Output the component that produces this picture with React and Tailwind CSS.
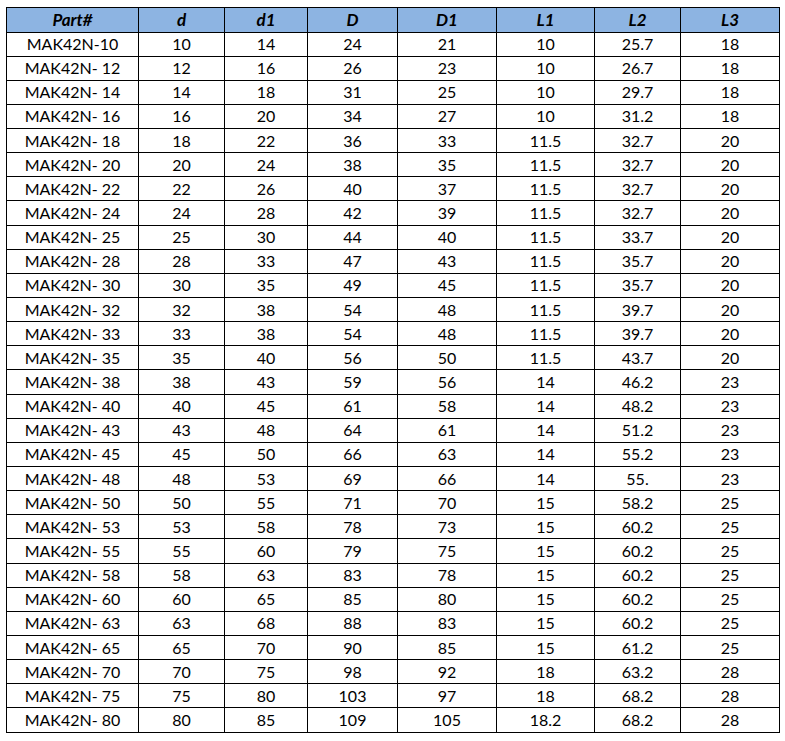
const COLS = ["Part#", "d", "d1", "D", "D1", "L1", "L2", "L3"];

const ROWS = [
  ["MAK42N-10", "10", "14", "24", "21", "10", "25.7", "18"],
  ["MAK42N- 12", "12", "16", "26", "23", "10", "26.7", "18"],
  ["MAK42N- 14", "14", "18", "31", "25", "10", "29.7", "18"],
  ["MAK42N- 16", "16", "20", "34", "27", "10", "31.2", "18"],
  ["MAK42N- 18", "18", "22", "36", "33", "11.5", "32.7", "20"],
  ["MAK42N- 20", "20", "24", "38", "35", "11.5", "32.7", "20"],
  ["MAK42N- 22", "22", "26", "40", "37", "11.5", "32.7", "20"],
  ["MAK42N- 24", "24", "28", "42", "39", "11.5", "32.7", "20"],
  ["MAK42N- 25", "25", "30", "44", "40", "11.5", "33.7", "20"],
  ["MAK42N- 28", "28", "33", "47", "43", "11.5", "35.7", "20"],
  ["MAK42N- 30", "30", "35", "49", "45", "11.5", "35.7", "20"],
  ["MAK42N- 32", "32", "38", "54", "48", "11.5", "39.7", "20"],
  ["MAK42N- 33", "33", "38", "54", "48", "11.5", "39.7", "20"],
  ["MAK42N- 35", "35", "40", "56", "50", "11.5", "43.7", "20"],
  ["MAK42N- 38", "38", "43", "59", "56", "14", "46.2", "23"],
  ["MAK42N- 40", "40", "45", "61", "58", "14", "48.2", "23"],
  ["MAK42N- 43", "43", "48", "64", "61", "14", "51.2", "23"],
  ["MAK42N- 45", "45", "50", "66", "63", "14", "55.2", "23"],
  ["MAK42N- 48", "48", "53", "69", "66", "14", "55.", "23"],
  ["MAK42N- 50", "50", "55", "71", "70", "15", "58.2", "25"],
  ["MAK42N- 53", "53", "58", "78", "73", "15", "60.2", "25"],
  ["MAK42N- 55", "55", "60", "79", "75", "15", "60.2", "25"],
  ["MAK42N- 58", "58", "63", "83", "78", "15", "60.2", "25"],
  ["MAK42N- 60", "60", "65", "85", "80", "15", "60.2", "25"],
  ["MAK42N- 63", "63", "68", "88", "83", "15", "60.2", "25"],
  ["MAK42N- 65", "65", "70", "90", "85", "15", "61.2", "25"],
  ["MAK42N- 70", "70", "75", "98", "92", "18", "63.2", "28"],
  ["MAK42N- 75", "75", "80", "103", "97", "18", "68.2", "28"],
  ["MAK42N- 80", "80", "85", "109", "105", "18.2", "68.2", "28"],
];

// column widths taken from the sheet
const WIDTHS = ["w-[132px]", "w-[86px]", "w-[83px]", "w-[90px]", "w-[99px]", "w-[98px]", "w-[86px]", "w-[99px]"];

export default function App() {
  return (
    <div className="bg-white w-[785px] h-[741px] pl-[6px] pt-[7px] font-['Lato','Liberation_Sans',sans-serif] text-black">
      <table className="table-fixed border-collapse w-[773px] text-[16px] leading-none">
        <colgroup>
          {WIDTHS.map((w, i) => (
            <col key={i} className={w} />
          ))}
        </colgroup>
        <thead>
          <tr className="h-[24.5px] bg-[#8db4e2]">
            {COLS.map((c) => (
              <th key={c} className="border border-black text-center text-[17px] font-bold italic p-0">
                {c}
              </th>
            ))}
          </tr>
        </thead>
        <tbody>
          {ROWS.map((r) => (
            <tr key={r[0]} className="h-[24.15px]">
              {r.map((v, i) => (
                <td key={i} className="border border-black text-center p-0">
                  {v}
                </td>
              ))}
            </tr>
          ))}
        </tbody>
      </table>
    </div>
  );
}
